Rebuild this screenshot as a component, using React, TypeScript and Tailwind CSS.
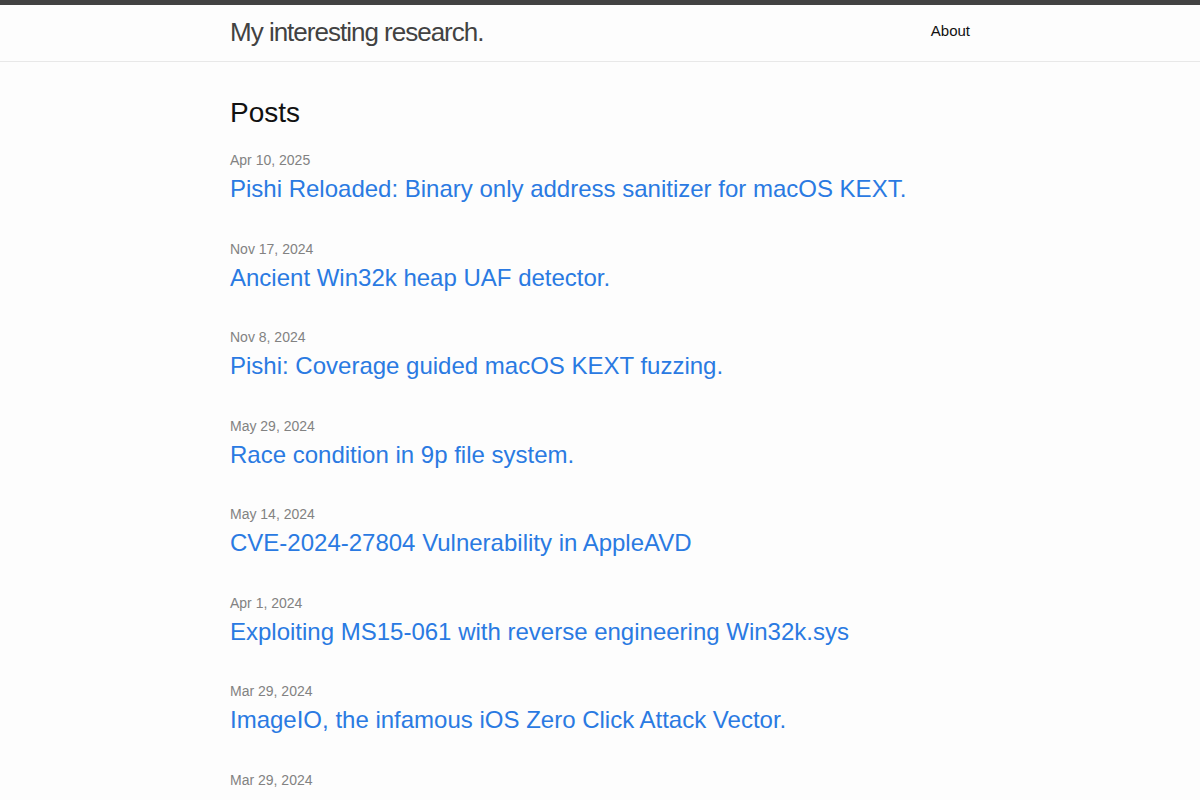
const posts = [
  { date: "Apr 10, 2025", title: "Pishi Reloaded: Binary only address sanitizer for macOS KEXT." },
  { date: "Nov 17, 2024", title: "Ancient Win32k heap UAF detector." },
  { date: "Nov 8, 2024", title: "Pishi: Coverage guided macOS KEXT fuzzing." },
  { date: "May 29, 2024", title: "Race condition in 9p file system." },
  { date: "May 14, 2024", title: "CVE-2024-27804 Vulnerability in AppleAVD" },
  { date: "Apr 1, 2024", title: "Exploiting MS15-061 with reverse engineering Win32k.sys" },
  { date: "Mar 29, 2024", title: "ImageIO, the infamous iOS Zero Click Attack Vector." },
  { date: "Mar 29, 2024", title: "" },
];

export default function App() {
  return (
    <div className="min-h-screen bg-[#fdfdfd] text-[#111] font-['Liberation_Sans',Arial,sans-serif] text-base leading-[1.5]">
      {/* Site header */}
      <header className="border-t-[5px] border-t-[#424242] border-b border-b-[#e8e8e8] h-[62px]">
        <div className="max-w-[800px] mx-auto px-[30px] flex items-start justify-between">
          <a href="#" className="text-[26px] font-light tracking-[-1px] leading-[54px] text-[#424242]">
            My interesting research.
          </a>
          <nav className="leading-[52px]">
            <a href="#" className="text-[15px] text-[#111]">
              About
            </a>
          </nav>
        </div>
      </header>

      {/* Post list */}
      <main className="py-[30px]">
        <div className="max-w-[800px] mx-auto px-[30px]">
          <h2 className="text-[28px] leading-[42px] mb-[16px]">Posts</h2>
          <ul>
            {posts.map((post, i) => (
              <li key={i} className="mb-[31.5px]">
                <span className="block text-[14px] leading-[21px] text-[#828282]">{post.date}</span>
                <h3 className="h-[36px]">
                  {post.title && (
                    <a href="#" className="block text-[24px] leading-[36px] text-[#2a7ae2]">
                      {post.title}
                    </a>
                  )}
                </h3>
              </li>
            ))}
          </ul>
        </div>
      </main>
    </div>
  );
}
